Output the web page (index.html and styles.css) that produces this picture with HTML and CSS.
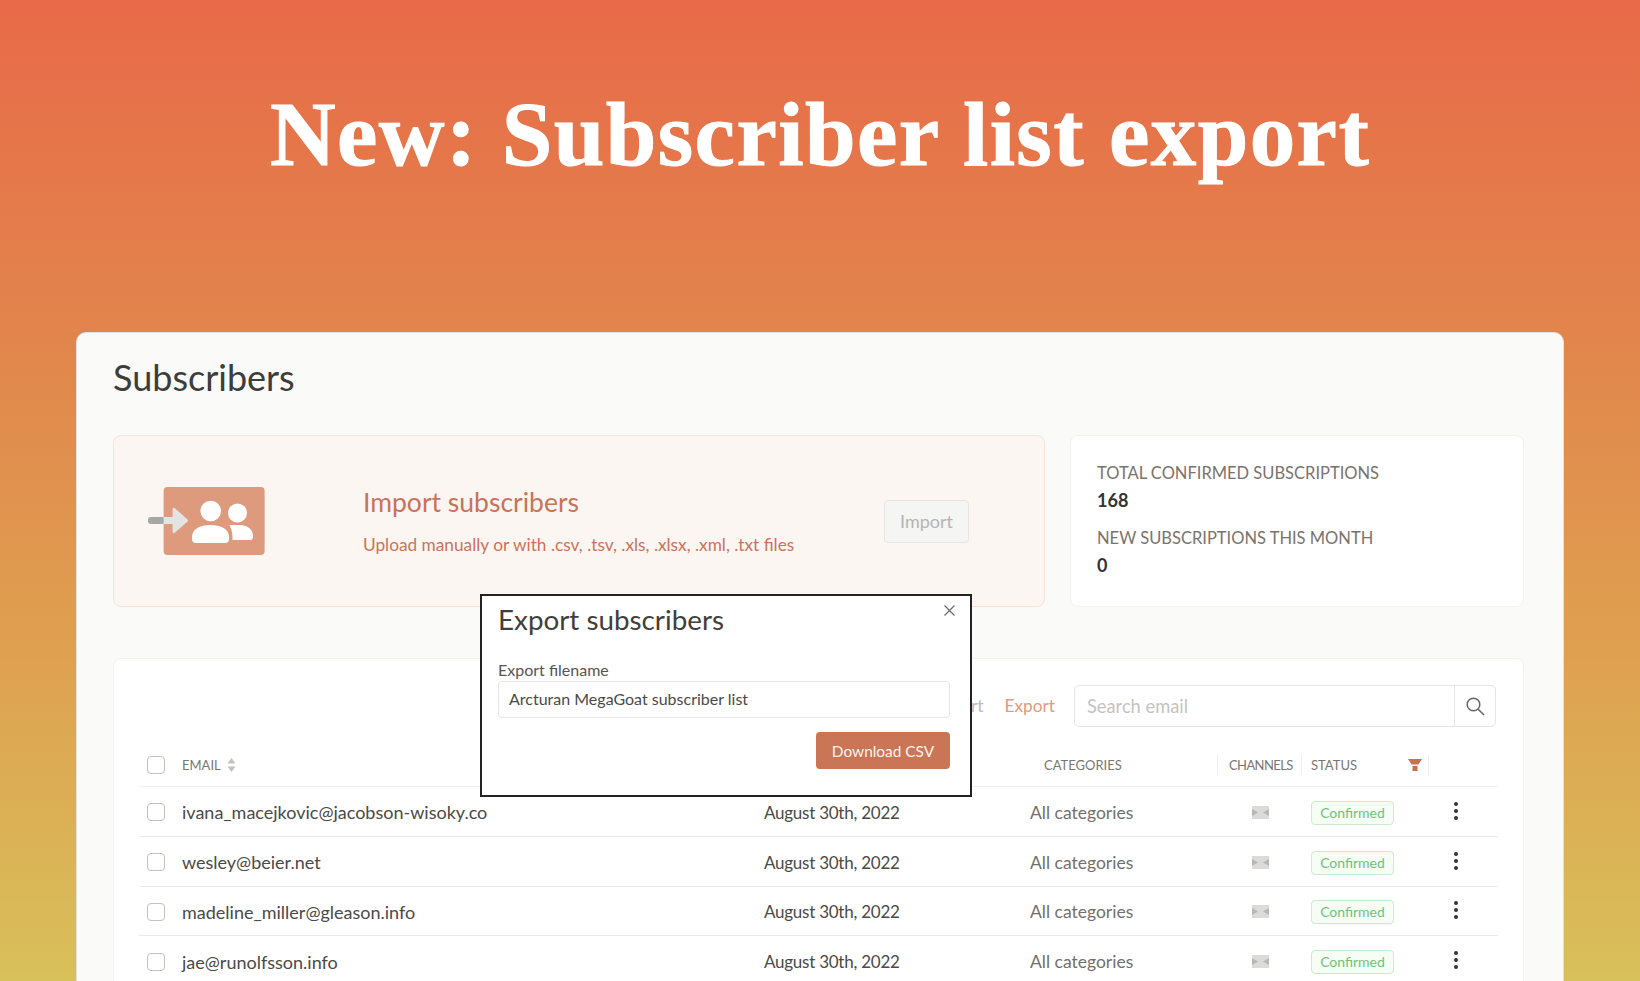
FILE: index.html
```html
<!DOCTYPE html>
<html lang="en">
<head>
<meta charset="utf-8">
<title>New: Subscriber list export</title>
<link rel="stylesheet" href="styles.css">
</head>
<body>
<div class="page">
  <h1 class="headline">New: Subscriber list export</h1>
  <main class="panel">
    <h2 class="panel-title">Subscribers</h2>
    <div class="top-row">
      <section class="import-box">
        <svg class="import-icon" width="117" height="68" viewBox="0 0 117 68">
          <rect x="15.600" y="0" width="101" height="68" rx="4" fill="#dd9a7d"/>
          <rect x="0" y="30" width="17" height="7" rx="3" fill="#a9a7a4"/>
          <path d="M15.600 30h9v-8q0-2 2-1l13 11.500q1 1 0 2l-13 11.500q-2 1-2-1v-8h-9z" fill="#e3e3e3"/>
          <circle cx="62.700" cy="24" r="10.300" fill="#fff"/>
          <path d="M48 56q-4 0-4-4v-2c0-8 8-12 18.500-12s18.500 4 18.500 12v2q0 4-4 4z" fill="#fff"/>
          <circle cx="89.500" cy="26" r="9.500" fill="#fff"/>
          <path d="M81.500 38h10c9 0 13.500 5 13.500 11v1q0 3-3 3h-17.500q.5-8-3-15z" fill="#fff"/>
        </svg>
        <div class="import-text">
          <div class="import-title">Import subscribers</div>
          <div class="import-sub">Upload manually or with .csv, .tsv, .xls, .xlsx, .xml, .txt files</div>
        </div>
        <button class="import-btn">Import</button>
      </section>
      <section class="stats">
        <div class="stat-label">TOTAL CONFIRMED SUBSCRIPTIONS</div>
        <div class="stat-value">168</div>
        <div class="stat-label stat-second">NEW SUBSCRIPTIONS THIS MONTH</div>
        <div class="stat-value">0</div>
      </section>
    </div>
    <section class="table-card">
      <div class="toolbar">
        <span class="tool-muted">Import</span>
        <span class="tool-link">Export</span>
        <div class="search">
          <span class="search-input">Search email</span>
          <span class="search-btn">
            <svg width="20" height="20" viewBox="0 0 20 20" fill="none" stroke="#666" stroke-width="1.500"><circle cx="8.500" cy="8.500" r="6.300"/><path d="M13 13l6 6"/></svg>
          </span>
        </div>
      </div>
      <div class="row head">
        <span class="box"></span>
        <span class="head-email">EMAIL
          <svg width="9" height="14" viewBox="0 0 9 14" fill="#c4c2bf"><path d="M4.500 0l4 5.500h-8zM4.500 14l4-5.500h-8z"/></svg>
        </span>
        <span></span>
        <span class="head-cat">CATEGORIES</span>
        <span class="head-chan">CHANNELS</span>
        <span class="head-status">STATUS
          <svg width="14" height="12" viewBox="0 0 14 12" fill="#c9704f"><path d="M0 0h14l-4 6v-.5h-6v.5zM4.500 7h5v5h-5z"/></svg>
        </span>
        <span></span>
      </div>
      <div class="row">
        <span class="box"></span><span class="email">ivana_macejkovic@jacobson-wisoky.co</span><span class="date">August 30th, 2022</span><span class="cat">All categories</span>
        <span class="chan"><svg class="mail" width="17" height="13" viewBox="0 0 17 13"><rect width="17" height="13" fill="#dcdbda"/><path d="M0 3l6 3.500-6 3.500zM17 3l-6 3.500 6 3.500z" fill="#b9b8b6"/></svg></span>
        <span class="status"><span class="badge">Confirmed</span></span><span class="dots"><i></i><i></i><i></i></span>
      </div>
      <div class="row">
        <span class="box"></span><span class="email">wesley@beier.net</span><span class="date">August 30th, 2022</span><span class="cat">All categories</span>
        <span class="chan"><svg class="mail" width="17" height="13" viewBox="0 0 17 13"><rect width="17" height="13" fill="#dcdbda"/><path d="M0 3l6 3.500-6 3.500zM17 3l-6 3.500 6 3.500z" fill="#b9b8b6"/></svg></span>
        <span class="status"><span class="badge">Confirmed</span></span><span class="dots"><i></i><i></i><i></i></span>
      </div>
      <div class="row">
        <span class="box"></span><span class="email">madeline_miller@gleason.info</span><span class="date">August 30th, 2022</span><span class="cat">All categories</span>
        <span class="chan"><svg class="mail" width="17" height="13" viewBox="0 0 17 13"><rect width="17" height="13" fill="#dcdbda"/><path d="M0 3l6 3.500-6 3.500zM17 3l-6 3.500 6 3.500z" fill="#b9b8b6"/></svg></span>
        <span class="status"><span class="badge">Confirmed</span></span><span class="dots"><i></i><i></i><i></i></span>
      </div>
      <div class="row">
        <span class="box"></span><span class="email">jae@runolfsson.info</span><span class="date">August 30th, 2022</span><span class="cat">All categories</span>
        <span class="chan"><svg class="mail" width="17" height="13" viewBox="0 0 17 13"><rect width="17" height="13" fill="#dcdbda"/><path d="M0 3l6 3.500-6 3.500zM17 3l-6 3.500 6 3.500z" fill="#b9b8b6"/></svg></span>
        <span class="status"><span class="badge">Confirmed</span></span><span class="dots"><i></i><i></i><i></i></span>
      </div>
    </section>
    <div class="modal">
      <span class="modal-close">
        <svg width="11" height="11" viewBox="0 0 11 11" stroke="#666" stroke-width="1.100"><path d="M.5.500l10 10M10.500.500l-10 10"/></svg>
      </span>
      <div class="modal-title">Export subscribers</div>
      <div class="modal-label">Export filename</div>
      <div class="modal-input">Arcturan MegaGoat subscriber list</div>
      <div class="modal-actions"><button class="download">Download CSV</button></div>
    </div>
  </main>
</div>
</body>
</html>
```
FILE: styles.css
```css
* { box-sizing: border-box; }
html, body { margin: 0; height: 981px; overflow: hidden; }
body { font-family: Lato, "Open Sans", sans-serif; }
.page {
  height: 981px;
  overflow: hidden;
  padding-top: 85px;
  background: linear-gradient(180deg, #e86a48 0%, #e2844c 33%, #dfa050 66%, #d8c05a 100%);
}
.headline {
  margin: 0;
  height: 247px;
  font: 700 91px/100px "Liberation Serif", serif;
  letter-spacing: 1.400px;
  -webkit-text-stroke: 1px #fff;
  color: #fff;
  text-align: center;
}
.panel {
  position: relative;
  margin: 0 76px;
  height: 700px;
  padding: 22px 39px 0 36px;
  background: #fafaf8;
  border: 1px solid #e3e1dd;
  border-radius: 10px;
}
.panel-title {
  margin: 0;
  height: 80px;
  font: 400 36px/44px Lato, sans-serif;
  color: #3d3d3b;
}
.top-row { display: flex; gap: 25px; height: 172px; }
.import-box {
  flex: 0 0 932px;
  display: flex;
  align-items: center;
  padding-left: 34px;
  background: #fcf6f2;
  border: 1px solid #f8e2d6;
  border-radius: 8px;
}
.import-icon { flex: none; overflow: visible; }
.import-text { margin-left: 98px; flex: 1; color: #c9735a; }
.import-title { font-size: 26.500px; line-height: 34px; margin-bottom: 14px; margin-top: -1px; }
.import-sub { font-size: 17.250px; line-height: 24px; }
.import-btn {
  width: 85px;
  height: 43px;
  margin-right: 75px;
  font: 18px Lato, sans-serif;
  color: #b5b4b2;
  background: #f5f5f4;
  border: 1px solid #e6e5e3;
  border-radius: 4px;
}
.stats {
  flex: 1;
  padding: 25px 26px;
  background: #fff;
  border: 1px solid #f3f2ef;
  border-radius: 8px;
}
.stat-label { font-size: 16.500px; line-height: 24px; color: #7a736d; }
.stat-second { margin-top: 11px; }
.stat-value { font-size: 18px; line-height: 30px; font-weight: 700; color: #333; }
.table-card {
  margin-top: 51px;
  height: 400px;
  padding: 0 25px;
  background: #fff;
  border: 1px solid #f3f2ef;
  border-radius: 8px;
}
.toolbar {
  height: 80px;
  padding-top: 26px;
  display: flex;
  justify-content: flex-end;
  align-items: flex-start;
  padding-right: 2px;
}
.tool-muted, .tool-link { font-size: 17.300px; line-height: 42px; }
.tool-muted { color: #bbb; margin-right: 21px; }
.tool-link { color: #e29a7d; margin-right: 19px; }
.search {
  display: flex;
  width: 422px;
  height: 42px;
  border: 1px solid #e6e5e3;
  border-radius: 5px;
}
.search-input { flex: 1; padding-left: 12px; font-size: 18.300px; line-height: 40px; color: #c4c3c1; }
.search-btn { width: 41px; display: flex; align-items: center; justify-content: center; border-left: 1px solid #e6e5e3; }
.row {
  display: grid;
  grid-template-columns: 35px 582px 266px 188px 84px 127px 1fr;
  align-items: center;
  height: 49.800px;
  padding: 2px 0 0 8px;
  border-bottom: 1px solid #ebeae7;
  font-size: 18px;
  color: #4a4a48;
}
.row.head { height: 48px; padding-top: 4px; font-size: 13px; color: #7a7672; border-bottom-color: #f3f2ef; }
.box { width: 18px; height: 18px; border: 1.500px solid #c4c1bc; border-radius: 4px; background: #fff; }
.head-email { display: flex; align-items: center; gap: 6px; }
.head-cat { padding-left: 14px; height: 20px; line-height: 20px; border-right: 1px solid #efeeeb; }
.head-chan { padding-left: 11px; height: 20px; line-height: 20px; letter-spacing: -0.600px; border-right: 1px solid #efeeeb; white-space: nowrap; }
.head-status { display: flex; justify-content: space-between; align-items: center; padding: 0 6px 0 9px; height: 20px; line-height: 20px; border-right: 1px solid #efeeeb; }
.date, .email { white-space: nowrap; }
.date { font-size: 17px; letter-spacing: -0.250px; }
.cat { font-size: 17.500px; color: #73706c; }
.chan { display: flex; justify-content: center; }
.mail { display: block; }
.status { padding-left: 9px; }
.badge {
  display: inline-block;
  width: 83px;
  height: 24px;
  text-align: center;
  font-size: 14px;
  line-height: 22px;
  color: #6fc378;
  background: #f5fdf4;
  border: 1px solid #c9eccb;
  border-radius: 4px;
}
.dots { display: flex; flex-direction: column; gap: 3px; padding-left: 25px; margin-top: -3px; }
.dots i { width: 4px; height: 4px; border-radius: 50%; background: #333; }
.modal {
  position: absolute;
  left: 403px;
  top: 261px;
  width: 492px;
  height: 203px;
  padding: 7px 20px 0 16px;
  background: #fff;
  border: 2px solid #222;
}
.modal-close { position: absolute; right: 15px; top: 9px; line-height: 0; }
.modal-title { font-size: 27.800px; line-height: 34px; color: #3f3f3d; margin-bottom: 22px; }
.modal-label { font-size: 16px; line-height: 22px; color: #565553; }
.modal-input {
  height: 37px;
  padding-left: 10px;
  font-size: 16px;
  line-height: 34px;
  color: #4a4a48;
  border: 1px solid #e8e7e4;
  border-radius: 4px;
}
.modal-actions { display: flex; justify-content: flex-end; margin-top: 14px; }
.download {
  width: 134px;
  height: 37px;
  font: 15.400px Lato, sans-serif;
  color: #fdf3ee;
  background: #c97556;
  border: 0;
  border-radius: 4px;
}
```
